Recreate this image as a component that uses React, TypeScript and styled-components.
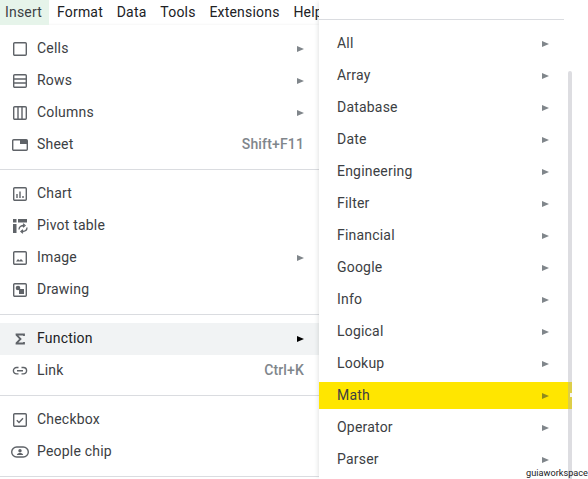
import React from "react";
import styled, { createGlobalStyle } from "styled-components";

const GlobalStyle = createGlobalStyle`
  html, body {
    margin: 0;
    padding: 0;
    background: #ffffff;
    overflow: hidden;
  }
  body {
    font-family: Roboto, "Liberation Sans", sans-serif;
  }
`;

const Page = styled.div`
  position: relative;
  width: 588px;
  height: 479px;
  overflow: hidden;
  background: #ffffff;
`;

const MenuBar = styled.div`
  display: flex;
  height: 25px;
  align-items: stretch;
`;

const BarItem = styled.div<{ $active?: boolean }>`
  display: flex;
  align-items: center;
  padding: ${({ $active }) => ($active ? "0 7px 2px 5px" : "0 6.9px 2px")};
  margin-right: ${({ $active }) => ($active ? "1px" : "0")};
  box-sizing: border-box;
  font-size: 14px;
  letter-spacing: 0.2px;
  color: ${({ $active }) => ($active ? "#3c4043" : "#202124")};
  background: ${({ $active }) => ($active ? "#e6f4ea" : "transparent")};
`;

// left dropdown
const Menu = styled.div`
  width: 319px;
  height: 454px;
  padding-top: 8px;
  box-sizing: border-box;
  background: #ffffff;
  box-shadow: 0 1px 3px rgba(60, 64, 67, 0.2);
`;

const Row = styled.div<{ $hover?: boolean }>`
  display: flex;
  align-items: center;
  height: 32px;
  padding: 0 15px 0 12px;
  font-size: 14px;
  letter-spacing: 0.2px;
  color: ${({ $hover }) => ($hover ? "#202124" : "#3c4043")};
  background: ${({ $hover }) => ($hover ? "#f1f3f4" : "transparent")};
`;

const IconSlot = styled.span`
  display: flex;
  align-items: center;
  justify-content: center;
  width: 16px;
  height: 16px;
  margin-right: 9px;
  color: #5f6368;
`;

const Label = styled.span`
  flex: 1;
  margin-top: -2px;
`;

const Shortcut = styled.span`
  font-weight: 500;
  letter-spacing: 0.15px;
  color: #80868b;
  margin-top: -2px;
`;

const Arrow = styled.span<{ $dark?: boolean; $olive?: boolean }>`
  width: 0;
  height: 0;
  border-style: solid;
  border-width: 3.5px 0 3.5px 7px;
  border-color: transparent transparent transparent
    ${({ $dark, $olive }) => ($dark ? "#000000" : $olive ? "#8f8a1e" : "#80868b")};
`;

const Divider = styled.div`
  height: 1px;
  background: #dadce0;
  margin: 8px 0 8px;
`;

// submenu that opens over the dropdown and menu bar
const SubMenu = styled.div`
  position: absolute;
  left: 319px;
  top: 0;
  width: 253px;
  height: 479px;
  padding-top: 19px;
  box-sizing: border-box;
  background: #ffffff;
  box-shadow: -3px 0 4px -2px rgba(60, 64, 67, 0.14);
`;

const SubTop = styled.div`
  width: 245px;
  height: 8px;
  border-top: 1px solid #dadce0;
`;

const SubRow = styled.div<{ $marked?: boolean }>`
  display: flex;
  align-items: center;
  justify-content: space-between;
  height: 32px;
  padding: 0 23px 0 18px;
  font-size: 14px;
  letter-spacing: 0.2px;
  color: #3c4043;
  background: ${({ $marked }) => ($marked ? "#ffe600" : "transparent")};

  & > span:first-child {
    margin-top: -2px;
  }
`;

const MarkedRow = styled(SubRow)`
  height: 27px;
  margin: 2px 0 3px;
`;

const ScrollThumb = styled.div`
  position: absolute;
  left: 249px;
  top: 71px;
  bottom: 0;
  width: 4px;
  background: rgba(170, 170, 180, 0.4);
  border-radius: 2px 2px 0 0;
`;

// little notch the scrollbar shows at the highlighted row
const ScrollNotch = styled.div`
  position: absolute;
  left: 251px;
  top: 393px;
  width: 2px;
  height: 4px;
  background: #f4f4f0;
`;

const Watermark = styled.div`
  position: absolute;
  right: 0;
  bottom: 0;
  font-size: 9.2px;
  line-height: 12px;
  color: #202124;
`;

const IconSvg = styled.svg`
  overflow: visible;
`;

const Svg = ({ children }: { children: React.ReactNode }) => (
  <IconSvg width={16} height={16} viewBox="0 0 16 16" fill="none" stroke="currentColor" strokeWidth="1.4">
    {children}
  </IconSvg>
);

const icons: Record<string, React.ReactNode> = {
  cells: (
    <Svg>
      <rect x="1.7" y="1.7" width="12.6" height="12.6" rx="1" />
    </Svg>
  ),
  rows: (
    <Svg>
      <rect x="1.7" y="1.7" width="12.6" height="12.6" rx="1" />
      <path d="M2 6h12M2 10h12" />
    </Svg>
  ),
  columns: (
    <Svg>
      <rect x="1.7" y="1.7" width="12.6" height="12.6" rx="1" />
      <path d="M6 2v12M10 2v12" />
    </Svg>
  ),
  sheet: (
    <Svg>
      <rect x="0.7" y="2.7" width="14.6" height="10.6" rx="1" />
      <path d="M8 3h7v4H8z" fill="currentColor" stroke="none" />
    </Svg>
  ),
  chart: (
    <Svg>
      <rect x="1.7" y="1.7" width="12.6" height="12.6" rx="1" />
      <path d="M5 8v4M8 5.5V12M11 10v2" />
    </Svg>
  ),
  pivot: (
    <Svg>
      <path d="M1 1h3.5v3.5H1zM6 1h9v3.5H6zM1 6h3.5v9H1z" fill="currentColor" stroke="none" />
      <path d="M7 11.500c0-2.500 2-4 5-4M11 5.800l2 1.700-2 1.700M15 9.500c0 2.500-2 4-5 4M11 11.800l-2 1.700 2 1.700" strokeWidth="1.3" />
    </Svg>
  ),
  image: (
    <Svg>
      <rect x="1.7" y="1.7" width="12.6" height="12.6" rx="1" />
      <path d="M4 11.500l2-2.500 1.500 1.500L9 9l2.500 2.500z" fill="currentColor" stroke="none" />
    </Svg>
  ),
  drawing: (
    <Svg>
      <rect x="1.7" y="1.7" width="12.6" height="12.6" rx="1" />
      <circle cx="6" cy="6" r="2.3" fill="currentColor" stroke="none" />
      <rect x="7" y="7" width="5" height="5" fill="currentColor" stroke="none" />
    </Svg>
  ),
  func: (
    <Svg>
      <path d="M12 5V3.500H4.500v.5L8.500 8l-4 4v.5H12V11" strokeWidth="1.800" />
    </Svg>
  ),
  link: (
    <Svg>
      <path d="M6.500 4.500H4.600a3.200 3.200 0 0 0 0 6.400h1.900M9.500 4.500h1.900a3.200 3.200 0 0 1 0 6.400H9.500M5 7.700h6" />
    </Svg>
  ),
  checkbox: (
    <Svg>
      <rect x="1.7" y="1.7" width="12.6" height="12.6" rx="1" />
      <path d="M4.800 8.200l2.200 2.200 4-4.200" />
    </Svg>
  ),
  chip: (
    <Svg>
      <rect x="-0.3" y="3" width="16.600" height="10" rx="5" />
      <circle cx="8" cy="6.800" r="1.700" fill="currentColor" stroke="none" />
      <path d="M4.800 11c.4-1.500 1.800-2 3.200-2s2.800.5 3.200 2z" fill="currentColor" stroke="none" />
    </Svg>
  ),
};

type Item = { label: string; icon: string; arrow?: boolean; shortcut?: string; hover?: boolean };

const groups: Item[][] = [
  [
    { label: "Cells", icon: "cells", arrow: true },
    { label: "Rows", icon: "rows", arrow: true },
    { label: "Columns", icon: "columns", arrow: true },
    { label: "Sheet", icon: "sheet", shortcut: "Shift+F11" },
  ],
  [
    { label: "Chart", icon: "chart" },
    { label: "Pivot table", icon: "pivot" },
    { label: "Image", icon: "image", arrow: true },
    { label: "Drawing", icon: "drawing" },
  ],
  [
    { label: "Function", icon: "func", arrow: true, hover: true },
    { label: "Link", icon: "link", shortcut: "Ctrl+K" },
  ],
  [
    { label: "Checkbox", icon: "checkbox" },
    { label: "People chip", icon: "chip" },
  ],
];

const categories = [
  "All",
  "Array",
  "Database",
  "Date",
  "Engineering",
  "Filter",
  "Financial",
  "Google",
  "Info",
  "Logical",
  "Lookup",
  "Math",
  "Operator",
  "Parser",
];

export default function App() {
  return (
    <>
      <GlobalStyle />
      <Page>
        <MenuBar>
          <BarItem $active>Insert</BarItem>
          {["Format", "Data", "Tools", "Extensions", "Help"].map((name) => (
            <BarItem key={name}>{name}</BarItem>
          ))}
        </MenuBar>
        <Menu>
          {groups.map((group, i) => (
            <div key={i}>
              {group.map((item) => (
                <Row key={item.label} $hover={item.hover}>
                  <IconSlot>{icons[item.icon]}</IconSlot>
                  <Label>{item.label}</Label>
                  {item.arrow && <Arrow $dark={item.hover} />}
                  {item.shortcut && <Shortcut>{item.shortcut}</Shortcut>}
                </Row>
              ))}
              <Divider />
            </div>
          ))}
        </Menu>
        <SubMenu>
          <SubTop />
          {categories.map((name) =>
            name === "Math" ? (
              <MarkedRow key={name} $marked>
                <span>{name}</span>
                <Arrow $olive />
              </MarkedRow>
            ) : (
              <SubRow key={name}>
                <span>{name}</span>
                <Arrow />
              </SubRow>
            )
          )}
          <ScrollThumb />
          <ScrollNotch />
        </SubMenu>
        <Watermark>guiaworkspace</Watermark>
      </Page>
    </>
  );
}
